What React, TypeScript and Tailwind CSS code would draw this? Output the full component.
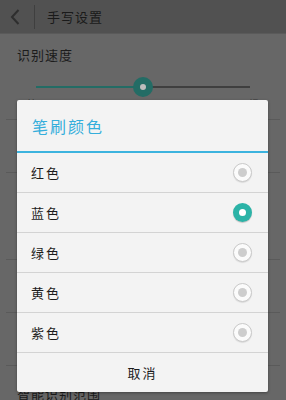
const colors = ['红色', '蓝色', '绿色', '黄色', '紫色']

function Radio({ checked }: { checked: boolean }) {
  if (checked) {
    return (
      <div className="w-[19px] h-[19px] rounded-full bg-[#2bb3a7] flex items-center justify-center shadow-[0_1px_1px_rgba(0,0,0,0.2)]">
        <div className="w-[7px] h-[7px] rounded-full bg-white" />
      </div>
    )
  }
  return (
    <div className="w-[19px] h-[19px] rounded-full bg-[#fbfbfb] border border-[#c9c9c9] flex items-center justify-center shadow-[0_1px_1px_rgba(0,0,0,0.1)]">
      <div className="w-[9px] h-[9px] rounded-full bg-[#cdcdcd]" />
    </div>
  )
}

export default function App() {
  return (
    <div
      className="relative w-[286px] h-[400px] overflow-hidden bg-[#676767] text-[#1c1c1c]"
      style={{ fontFamily: '"Noto Sans CJK SC", "Noto Sans", sans-serif' }}
    >
      {/* header */}
      <div className="h-[34px] bg-[#515151] border-b border-[#5a5a5a] flex items-center">
        <svg width="12" height="18" viewBox="0 0 12 18" className="ml-[9px]">
          <path d="M9.5 2 L3 9 L9.5 16" fill="none" stroke="#2e2e2e" strokeWidth="2" />
        </svg>
        <div className="w-px h-[24px] bg-[#3f3f3f] ml-[13px]" />
        <span className="ml-[12px] text-[13px] text-[#1a1a1a] tracking-[1px]">手写设置</span>
      </div>

      {/* speed */}
      <div className="px-[17px] pt-[12px]">
        <div className="text-[13px] leading-[18px] tracking-[1px]">识别速度</div>
        <div className="relative mx-[19px] mt-[13px] h-[20px] flex items-center">
          <div className="h-[2px] w-[107px] bg-[#236c65]" />
          <div className="h-[2px] flex-1 bg-[#3f3f3f]" />
          <div className="absolute left-[97px] top-0 w-[20px] h-[20px] rounded-full bg-[#236c65] flex items-center justify-center">
            <div className="w-[6px] h-[6px] rounded-full bg-[#bdbdbd]" />
          </div>
        </div>
        <div className="flex justify-between px-[10px] text-[10px] leading-[12px] text-[#3a3a3a] mt-[1px]">
          <span>快</span>
          <span>慢</span>
        </div>
      </div>
      <div className="mt-[9px] mx-[6px] h-px bg-[#5a5a5a]" />
      <div className="h-[52px]" />
      <div className="mx-[6px] h-px bg-[#5a5a5a]" />
      <div className="h-[86px]" />
      <div className="mx-[6px] h-px bg-[#5a5a5a]" />
      <div className="h-[52px]" />
      <div className="mx-[6px] h-px bg-[#5a5a5a]" />
      <div className="h-[52px]" />
      <div className="mx-[6px] h-px bg-[#5a5a5a]" />
      <div className="px-[17px] pt-[18px] text-[13px] text-[#1a1a1a] tracking-[1px]">智能识别范围</div>

      {/* dialog */}
      <div className="absolute left-[17px] top-[100px] w-[251px] h-[292px] bg-[#f3f3f3] rounded-[2px] shadow-[0_1px_3px_rgba(0,0,0,0.35)] flex flex-col">
        <div className="h-[51px] flex items-center pl-[15px] text-[16px] text-[#35aedb] tracking-[2px]">
          笔刷颜色
        </div>
        <div className="h-[2px] bg-[#3cb3de]" />
        {colors.map((c, i) => (
          <div key={c} className="h-[40px] border-b border-[#d3d3d3] flex items-center justify-between pl-[14px] pr-[16px]">
            <span className="text-[13px] text-[#1c1c1c] tracking-[2px]">{c}</span>
            <Radio checked={i === 1} />
          </div>
        ))}
        <div className="flex-1 flex items-center justify-center text-[13px] text-[#1c1c1c] tracking-[2px]">
          取消
        </div>
      </div>
    </div>
  )
}
